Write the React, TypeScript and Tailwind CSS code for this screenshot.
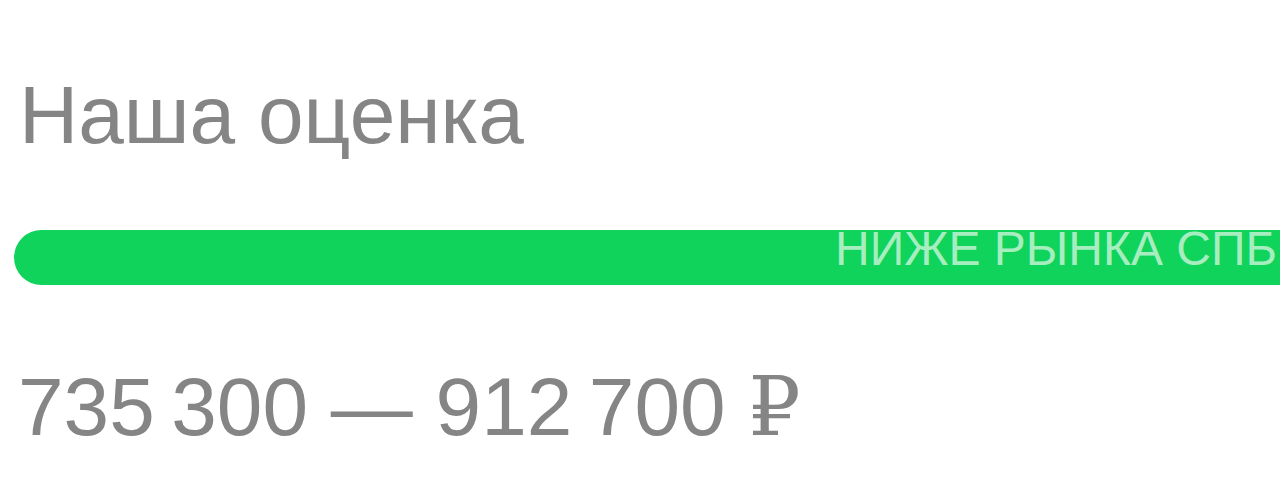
export default function App() {
  return (
    <div
      className="w-[1280px] h-[503px] overflow-hidden bg-white text-[#858585]"
      style={{ fontFamily: '"Liberation Sans", Arial, sans-serif' }}
    >
      <div className="pt-[74px]">
        <h1 className="pl-[19px] text-[82px] leading-[82px] font-normal whitespace-nowrap">
          Наша оценка
        </h1>

        <div className="ml-[14px] mt-[74px] h-[55px] w-[1400px] rounded-l-full bg-[#0fd35a] overflow-hidden flex items-start">
          <span className="-mt-[5px] pl-[821px] whitespace-nowrap text-[48px] leading-[48px] text-[#a6edc0]">
            НИЖЕ РЫНКА СПБ
          </span>
        </div>

        <div className="pl-[18px] mt-[81px] text-[82px] leading-[82px] whitespace-nowrap">
          {"735\u2009300 — 912\u2009700 "}
          <span style={{ fontFamily: '"Liberation Serif", "DejaVu Serif", serif' }}>₽</span>
        </div>
      </div>
    </div>
  );
}
